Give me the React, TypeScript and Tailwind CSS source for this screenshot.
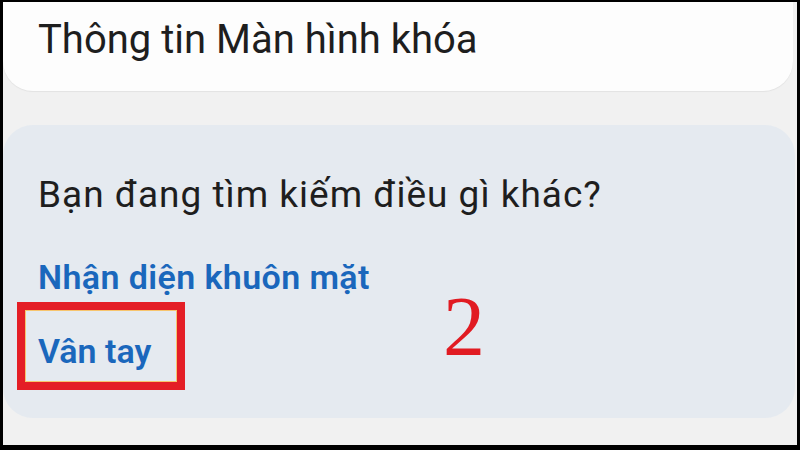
import React from "react";

const ROBOTO = "font-['Roboto','Liberation_Sans',sans-serif]";

export default function App() {
  return (
    <div className="w-[800px] h-[450px] bg-black pt-[2px] pl-[3px] pr-[3px] pb-[5px]">
      <div className={`relative h-full bg-[#f1f1f1] overflow-hidden flex flex-col ${ROBOTO}`}>
        {/* Top card */}
        <div className="h-[89px] mr-[4px] bg-[#fdfdfd] rounded-b-[30px] pl-[35px] pt-[14px] shadow-[0_1px_1px_rgba(0,0,0,0.06)]">
          <p className="text-[40px] leading-[48px] text-[#1e1e1e]">Thông tin Màn hình khóa</p>
        </div>

        {/* Suggestions card */}
        <div className="mt-[34px] h-[293px] mr-[2px] bg-[#e5eaf0] rounded-[30px] pl-[35px] pt-[50px]">
          <p className="text-[37px] leading-[40px] tracking-[1px] text-[#1e1e1e]">Bạn đang tìm kiếm điều gì khác?</p>
          <p className="mt-[42px] text-[34px] leading-[40px] tracking-[0.4px] font-semibold text-[#1a67bc]">Nhận diện khuôn mặt</p>
          <p className="mt-[34px] text-[34px] leading-[40px] font-semibold text-[#1a67bc]">Vân tay</p>
        </div>

        {/* Annotation overlays */}
        <div className="absolute left-[14px] top-[300px] w-[168px] h-[88px] border-[8px] border-[#e41e26]">
          <div className="h-full w-full border border-[#f7c56e]" />
        </div>
        <span className="absolute left-[440px] top-[283px] text-[84px] leading-[84px] text-[#e11b22] font-['Liberation_Serif','Times_New_Roman',serif]">
          2
        </span>
      </div>
    </div>
  );
}
